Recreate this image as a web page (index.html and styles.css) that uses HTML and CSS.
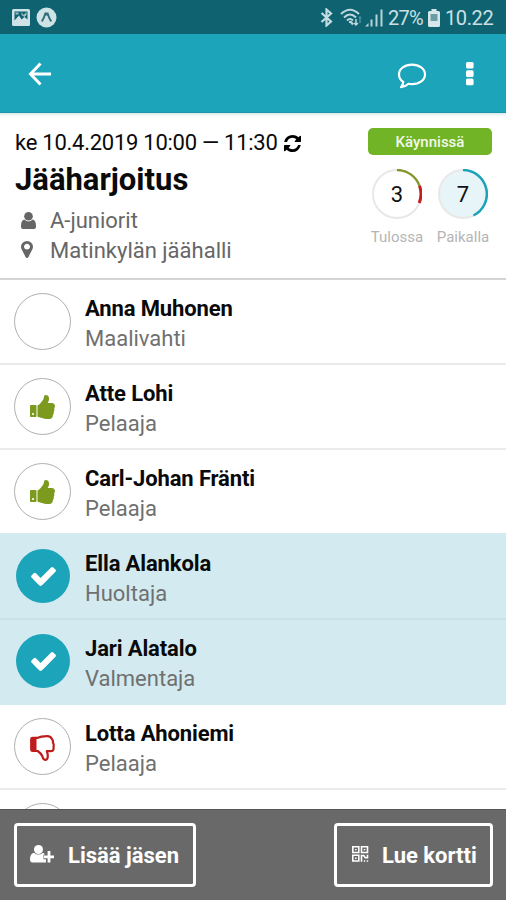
FILE: index.html
```html
<!DOCTYPE html>
<html lang="fi">
<head>
<meta charset="utf-8">
<title>Jääharjoitus</title>
<link rel="stylesheet" href="styles.css">
</head>
<body>
<svg class="defs" aria-hidden="true">
  <symbol id="up" viewBox="64 128 1600 1536" preserveAspectRatio="none"><path d="M320 1344q0-26-19-45t-45-19q-27 0-45.5 19t-18.5 45q0 27 18.5 45.5t45.5 18.5q26 0 45-18.5t19-45.5zm160-512v640q0 26-19 45t-45 19h-288q-26 0-45-19t-19-45v-640q0-26 19-45t45-19h288q26 0 45 19t19 45zm1184 0q0 86-55 149 15 44 15 76 3 76-43 137 17 56 0 117-15 57-54 94 9 112-49 181-64 76-197 78h-129q-66 0-144-15.500t-121.500-29-120.500-39.500q-123-43-158-44-26-1-45-19.500t-19-44.500v-641q0-25 18-43.500t43-20.500q24-2 76-59t101-121q68-87 101-120 18-18 31-48t17.500-48.500 13.500-60.500q7-39 12.500-61t19.500-52 34-50q19-19 45-19 46 0 82.500 10.500t60 26 40 40.500 24 45 12 50 5 45 .5 39q0 38-9.500 76t-19 60-27.500 56q-3 6-10 18t-11 22-8 24h277q78 0 135 57t57 135z"/></symbol>
  <symbol id="check" viewBox="121 334 1550 1188"><path d="M1671 566q0 40-28 68l-724 724-136 136q-28 28-68 28t-68-28l-136-136-362-362q-28-28-28-68t28-68l136-136q28-28 68-28t68 28l294 295 656-657q28-28 68-28t68 28l136 136q28 28 28 68z"/></symbol>
</svg>

<header class="status">
  <div class="status-left">
    <svg width="18" height="17" viewBox="0 0 18 17"><rect width="18" height="17" rx="1.500" fill="#cfe3e7"/><path d="M2.500 2.500h13v8l-3-2.500-3 2.500-2.500-4-4.500 5z" fill="#0f6370"/><path d="M3.500 3.500h3v2h-3zM9.500 3l2 3 3-3v3l-2 2-3-2z" fill="#9cc1c8"/></svg>
    <svg width="21" height="21" viewBox="0 0 21 21"><circle cx="10.500" cy="10.500" r="10" fill="#cfe3e7"/><path d="M5.800 14.500q2.300-3.500 3.500-8h2.400q1.200 4.500 3.500 8M8.800 8.500q1.700-2.500 3.400 0" fill="none" stroke="#326f7a" stroke-width="1.900"/></svg>
  </div>
  <div class="status-right">
    <svg class="bt" width="13" height="19" viewBox="0 0 13 19"><path d="M1.500 5l9.500 8.500-4.500 4v-16l4.500 4L1.500 14" fill="none" stroke="#c4dce1" stroke-width="2.200"/></svg>
    <svg class="wifi" width="23" height="19" viewBox="0 0 23 19" fill="none" stroke="#bdd7dc" stroke-width="2"><path d="M1 6Q10-2.500 19 6M4 9.500Q10 3.500 16 9.500M7 12.500q3-3 6 0"/><path d="M9 14h2l2 2.500" stroke-width="2.200"/><path d="M16 11v6m-2-2l2 2 2-2" stroke-width="1.500"/><path d="M20 9v6m-1-5l1-1 1 1" stroke="#4b98a4" stroke-width="1.400"/></svg>
    <svg class="signal" width="18" height="18" viewBox="0 0 18 18"><path d="M0 17.500l3.500-3.500v3.500zM5.500 17.500v-7h2v7zM10.500 17.500v-12h2v12zM15.500 17.500v-17h2v17z" fill="#b7d3d8"/></svg>
    <span class="percent">27%</span>
    <svg class="battery" width="12" height="18" viewBox="0 0 12 18"><path d="M3.500 0h5v2h2q1.500 0 1.500 1.500v13q0 1.500-1.500 1.500h-9Q0 18 0 16.500v-13Q0 2 1.500 2h2z" fill="#d5e7ea"/><path d="M2.500 5h7v7h-7z" fill="#6c9ca5"/></svg>
    <span class="clock">10.22</span>
  </div>
</header>

<nav class="bar">
  <svg class="back" width="24" height="24" viewBox="0 0 24 24" fill="none" stroke="#fff" stroke-width="3"><path d="M12.500 1.500L2.500 12l10 10.500M2.500 12H23"/></svg>
  <svg class="chat" width="30" height="26" viewBox="0 0 30 26" fill="none" stroke="#fff" stroke-width="2.200" stroke-linejoin="round"><path d="M15 1.600c7.300 0 13 4.300 13 9.800s-5.700 9.800-13 9.800q-2 0-3.500-.4-3.200 3-7.500 3.400 2-2 2.300-5.300Q2 16 2 11.400C2 5.900 7.700 1.600 15 1.600z"/></svg>
  <svg class="more" width="8" height="24" viewBox="0 0 8 24" fill="#fff"><rect width="7.600" height="6.600" rx="1.500"/><rect y="8.300" width="7.600" height="6.600" rx="1.500"/><rect y="16.600" width="7.600" height="6.600" rx="1.500"/></svg>
</nav>

<section class="event">
  <div class="info">
    <div class="date"><span>ke 10.4.2019 10:00 — 11:30</span>
      <svg width="17" height="17" viewBox="128 128 1536 1536"><path d="M1639 1056q0 5-1 7-64 268-268 434.500t-478 166.500q-146 0-282.500-55t-243.500-157l-129 129q-19 19-45 19t-45-19-19-45v-448q0-26 19-45t45-19h448q26 0 45 19t19 45-19 45l-137 137q71 66 161 102t187 36q134 0 250-65t186-179q11-17 53-117 8-23 30-23h192q13 0 22.500 9.500t9.500 22.500zm25-800v448q0 26-19 45t-45 19h-448q-26 0-45-19t-19-45 19-45l138-138q-148-137-349-137-134 0-250 65t-186 179q-11 17-53 117-8 23-30 23h-199q-13 0-22.500-9.500t-9.500-22.500v-7q65-268 270-434.500t480-166.500q146 0 284 55.500t245 156.500l130-129q19-19 45-19t45 19 19 45z"/></svg>
    </div>
    <h1>Jääharjoitus</h1>
    <div class="meta"><svg width="15" height="17" viewBox="0 0 15 17" fill="#666"><circle cx="7.500" cy="4.300" r="4.300"/><path d="M3.300 7.500Q7.500 11.300 11.700 7.500 15 8.300 15 14v1q0 2-2 2H2q-2 0-2-2v-1Q0 8.300 3.300 7.500z"/></svg><span class="group">A-juniorit</span></div>
    <div class="meta"><svg width="12" height="17" viewBox="384 128 1024 1536" preserveAspectRatio="none" fill="#666"><path d="M1152 640q0-106-75-181t-181-75-181 75-75 181 75 181 181 75 181-75 75-181zm256 0q0 109-33 179l-364 774q-16 33-47.500 52t-67.500 19-67.500-19-46.500-52l-365-774q-33-70-33-179 0-212 150-362t362-150 362 150 150 362z"/></svg><span class="place">Matinkylän jäähalli</span></div>
  </div>
  <div class="state">
    <div class="badge">Käynnissä</div>
    <div class="counts">
      <div class="count">
        <div class="ring"><svg width="50" height="50" viewBox="0 0 50 50" fill="none"><circle cx="25" cy="25" r="24" stroke="#e8e8e8" stroke-width="2"/><path d="M25 1A24 24 0 0 1 47.500 16.800" stroke="#83972b" stroke-width="2.400"/><path d="M47.500 16.800A24 24 0 0 1 47.200 34" stroke="#c42020" stroke-width="3"/></svg><b>3</b></div>
        <span class="coming">Tulossa</span>
      </div>
      <div class="count">
        <div class="ring"><svg width="50" height="50" viewBox="0 0 50 50"><circle cx="25" cy="25" r="24" fill="#e7f5f8" stroke="#e8e8e8" stroke-width="2"/><path d="M25 1A24 24 0 0 1 35.500 46.500" fill="none" stroke="#1ba3b7" stroke-width="2.500"/></svg><b>7</b></div>
        <span class="present">Paikalla</span>
      </div>
    </div>
  </div>
</section>

<main class="list">
  <div class="row"><i class="mark"></i><div class="who"><b>Anna Muhonen</b><span>Maalivahti</span></div></div>
  <div class="row"><i class="mark"><svg class="thumb"><use href="#up"/></svg></i><div class="who"><b>Atte Lohi</b><span>Pelaaja</span></div></div>
  <div class="row"><i class="mark"><svg class="thumb"><use href="#up"/></svg></i><div class="who"><b>Carl-Johan Fränti</b><span>Pelaaja</span></div></div>
  <div class="row on"><i class="mark"><svg class="tick"><use href="#check"/></svg></i><div class="who"><b>Ella Alankola</b><span>Huoltaja</span></div></div>
  <div class="row on"><i class="mark"><svg class="tick"><use href="#check"/></svg></i><div class="who"><b>Jari Alatalo</b><span>Valmentaja</span></div></div>
  <div class="row"><i class="mark"><svg class="down" width="25" height="26" viewBox="0 0 25 26"><path d="M1 3h5.500v13H2.500Q1 16 1 14.500z" fill="#bf1d1d"/><path d="M1.200 14.700V4.200Q1.200 2.900 2.600 2.900H7Q11 1.200 17 1.200q4 0 4.800 2.800 1.600 1.500 1.100 3.700 1.300 1.700.6 3.900.8 4.600-3 4.600h-3.700q1 2.800 1 5 0 3.600-2.700 3.600-2 0-2.700-3.500-1.500-3.100-4.700-5.300H2.600q-1.400 0-1.400-1.300z" fill="none" stroke="#bf1d1d" stroke-width="2.200" stroke-linejoin="round"/></svg></i><div class="who"><b>Lotta Ahoniemi</b><span>Pelaaja</span></div></div>
  <div class="row"><i class="mark"></i></div>
</main>

<footer class="actions">
  <button class="btn add"><svg width="24" height="18" viewBox="0 0 24 18" fill="#fff"><circle cx="8.500" cy="4.500" r="4.500"/><path d="M4 7.700q4.500 3.700 9 0l1.500 1V12H16v5.500H2.500Q0 17.500 0 14.500 0 8.500 4 7.700z"/><path d="M19 6.500v11M13.500 12H24" stroke="#696969" stroke-width="4.500"/><path d="M19 6v11.500M14 11.800h10" stroke="#fff" stroke-width="2.800"/></svg><span>Lisää jäsen</span></button>
  <button class="btn card"><svg width="17" height="16" viewBox="0 0 17 16" fill="none" stroke="#fff" stroke-width="1.600"><path d="M.8.800h6v5.700h-6zM9.500.800h6v5.700h-6zM.8 9.300h6V15h-6z"/><path d="M3 3.600h1.600M11.700 3.600h1.600M3 12.200h1.600" stroke-width="1.400"/><path d="M9.500 15.800V9.500h2.300l1.500 2.300h2.200V8.700M11.800 15h1.400M14.700 15h1.500"/></svg><span>Lue kortti</span></button>
</footer>
</body>
</html>
```
FILE: styles.css
```css
* { box-sizing: border-box; }
html, body { margin: 0; height: 900px; overflow: hidden; }
body { display: flex; flex-direction: column; width: 506px; background: #fff; color: #0a0a0a; font-family: Roboto, sans-serif; }
svg { display: block; flex: none; }
.defs { position: absolute; width: 0; height: 0; }

.status { flex: none; display: flex; justify-content: space-between; height: 34px; padding: 1px 12px 0; background: #0f6371; color: #cbe0e4; font-size: 20px; line-height: 34px; }
.status-left, .status-right { display: flex; align-items: center; }
.status-left { gap: 6px; }
.status-right { width: 174px; }
.wifi { margin-left: 7px; }
.signal { margin-left: 2px; }
.percent { width: 36px; margin-left: 5px; letter-spacing: -0.8px; }
.battery { margin-left: 4px; }
.clock { margin-left: 5px; white-space: nowrap; letter-spacing: -0.4px; }

.bar { flex: none; display: flex; align-items: center; height: 79px; padding: 0 32px 0 28px; background: #1ba4ba; border-bottom: 1px solid #1895a9; }
.back { margin-top: 1px; }
.chat { margin-left: auto; margin-right: 39px; margin-top: 5px; }
.more { margin-top: 2px; }

.event { flex: none; display: flex; justify-content: space-between; height: 167px; padding: 14px 14px 0 15px; border-bottom: 2px solid #d4d4d4; background: linear-gradient(#dce9ea, #fff 4px); }
.date { display: flex; align-items: center; gap: 6px; height: 31px; font-size: 22px; letter-spacing: -0.26px; white-space: nowrap; }
.date svg { margin-top: 2px; }
h1 { margin: 0; height: 47px; font-size: 31px; line-height: 43px; font-weight: 700; }
.meta { display: flex; align-items: center; height: 30px; color: #666; font-size: 22px; }
.meta svg { width: 15px; margin: 0 14px 0 6px; }
.meta:last-child svg { width: 12px; margin: 0 17px 2px 6px; }
.state { width: 124px; }
.badge { height: 27px; margin-top: 1px; border-radius: 5px; background: #71b526; color: #f1f8e9; font-size: 15px; line-height: 28px; font-weight: 500; text-align: center; }
.counts { display: flex; justify-content: space-between; margin: 14px 0 0 0; }
.count { display: flex; flex-direction: column; align-items: center; width: 58px; color: #b5b5b5; font-size: 15px; line-height: 20px; }
.ring { display: grid; width: 50px; height: 50px; margin-bottom: 8px; }
.ring > * { grid-area: 1 / 1; }
.ring b { place-self: center; margin-top: 2px; color: #111; font-size: 22px; font-weight: 400; }

.list { flex: 1; min-height: 0; overflow: hidden; }
.row { display: flex; height: 85px; padding: 13px 14px 0 14px; border-bottom: 2px solid #ebebeb; }
.row.on { background: #d2eaf0; border-color: #c9e1e7; margin-top: -2px; height: 87px; padding-top: 15px; }
.row.on + .row.on { margin-top: 0; height: 85px; padding-top: 13px; border-color: #d2eaf0; }
.mark { flex: none; display: flex; align-items: center; justify-content: center; width: 57px; height: 57px; border: 1.5px solid #b0b0b0; border-radius: 50%; background: #fff; }
.on .mark { border: 0; width: 54px; height: 54px; margin: 1px 1px 0 2px; background: #1ba4ba; }
.thumb { width: 25px; height: 24px; fill: #7b9a1e; }
.tick { width: 25px; height: 19px; fill: #fff; margin-top: 1px; }
.down { margin-top: 2px; }
.who { display: flex; flex-direction: column; margin: 1px 0 0 14px; font-size: 22px; line-height: 30px; white-space: nowrap; }
.who b { font-weight: 700; letter-spacing: -0.13px; }
.who span { color: #707070; }

.actions { flex: none; display: flex; justify-content: space-between; height: 91px; padding: 13px 13px 0 14px; background: #696969; border-top: 1px solid #555; }
.btn { display: flex; align-items: center; height: 64px; padding: 0; border: 3px solid #fff; border-radius: 4px; background: none; color: #fff; font: 700 22px Roboto, sans-serif; white-space: nowrap; }
.add { width: 182px; padding-left: 13px; gap: 14px; }
.card { width: 159px; padding-left: 15px; gap: 13px; }
.add svg, .card svg { margin-bottom: 3px; }
```
